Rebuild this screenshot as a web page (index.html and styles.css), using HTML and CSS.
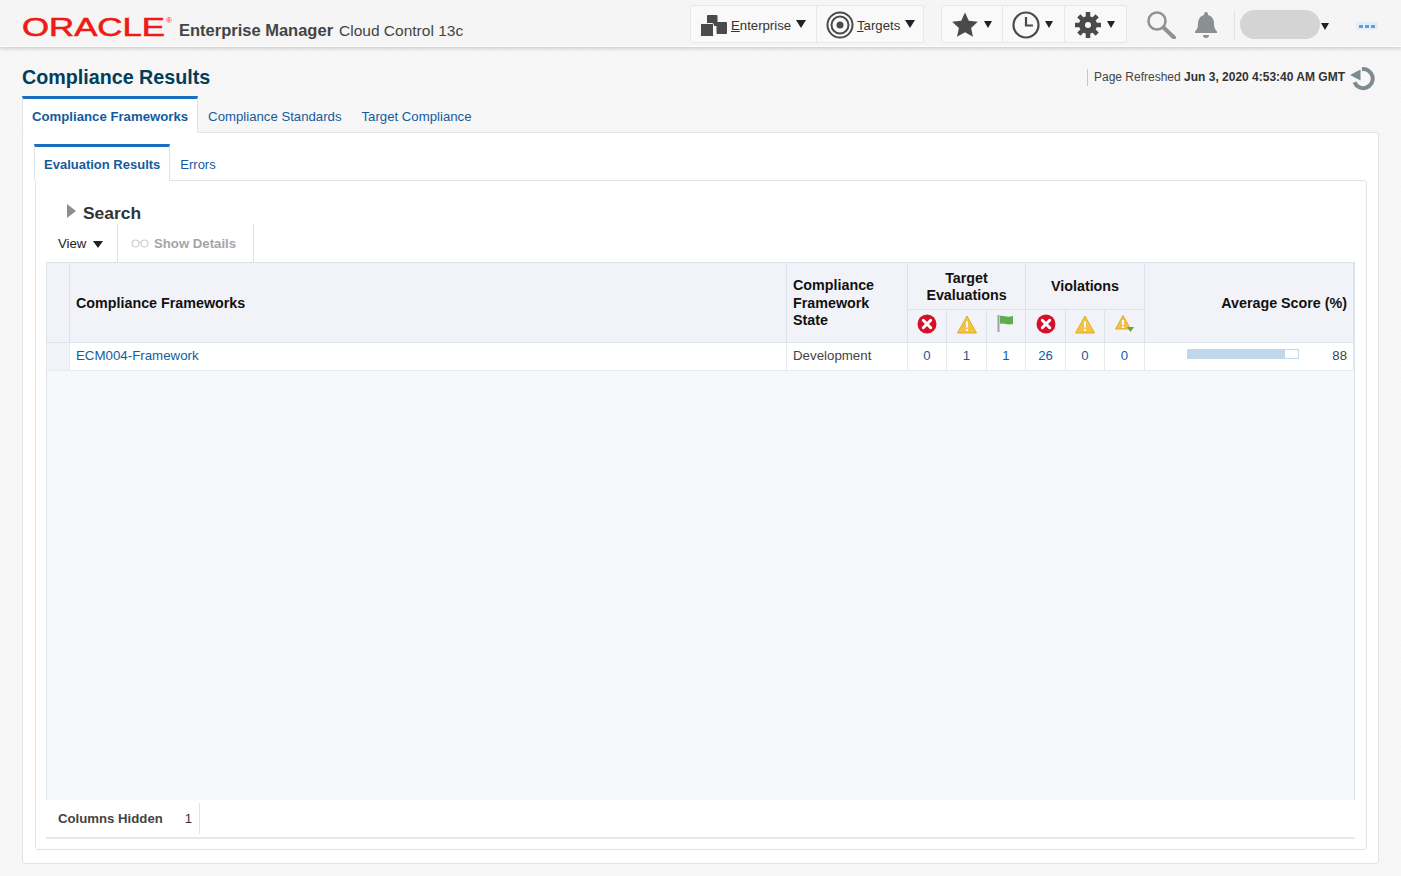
FILE: index.html
```html
<!DOCTYPE html>
<html lang="en">
<head>
<meta charset="utf-8">
<title>Compliance Results</title>
<link rel="stylesheet" href="styles.css">
</head>
<body>
<header class="topbar">
  <div class="brand">
    <svg class="logo" width="152" height="34" viewBox="0 0 152 34"><text class="logo-text" x="0" y="26" textLength="143" lengthAdjust="spacingAndGlyphs">ORACLE</text><text class="logo-reg" x="144" y="13">®</text></svg>
    <span class="brand-em">Enterprise Manager</span>
    <span class="brand-sub">Cloud Control 13c</span>
  </div>
  <nav class="tools">
    <div class="btn-group">
      <button class="tool tool-ent">
        <svg width="28" height="24" viewBox="0 0 28 24"><rect class="ico" x="7" y="2" width="10.500" height="11" rx="1"/><rect class="ico" x="16.500" y="9" width="10.500" height="12" rx="1"/><rect class="ico stroke-bg" x="0.500" y="10.500" width="13" height="13" rx="1"/></svg>
        <span class="tool-label"><u>E</u>nterprise</span><i class="caret caret-lg"></i>
      </button>
      <button class="tool tool-tgt">
        <svg width="28" height="28" viewBox="0 0 28 28"><circle class="line" cx="14" cy="14" r="12.500" stroke-width="2"/><circle class="line" cx="14" cy="14" r="8.500" stroke-width="2"/><circle class="ico" cx="14" cy="14" r="3.500"/></svg>
        <span class="tool-label"><u>T</u>argets</span><i class="caret caret-lg"></i>
      </button>
    </div>
    <div class="btn-group group-two">
      <button class="tool tool-star">
        <svg width="28" height="28" viewBox="0 0 28 28"><path class="ico" d="M14 1.500l3.800 8.300 9 1-6.700 6.100 1.900 8.900-8-4.600-8 4.600 1.900-8.900L1.200 10.800l9-1z"/></svg>
        <i class="caret"></i>
      </button>
      <button class="tool tool-clock">
        <svg width="28" height="28" viewBox="0 0 28 28"><circle class="line" cx="14" cy="14" r="12.500" stroke-width="2.200"/><path class="line" d="M14 6v8.500h7" stroke-width="2.200"/></svg>
        <i class="caret"></i>
      </button>
      <button class="tool tool-gear">
        <svg width="28" height="28" viewBox="0 0 28 28"><circle class="line" cx="14" cy="14" r="6" stroke-width="6"/><path class="line" d="M14 1v6M14 21v6M1 14h6M21 14h6M4.800 4.800l4.200 4.200M19 19l4.200 4.200M4.800 23.200L9 19M19 9l4.200-4.200" stroke-width="4.500"/></svg>
        <i class="caret"></i>
      </button>
    </div>
    <svg class="search-ico" width="30" height="28" viewBox="0 0 30 28"><circle class="line-gray" cx="10" cy="10" r="8.500" stroke-width="2.500"/><path class="line-gray" d="M16.500 16.500l10.500 10" stroke-width="4" stroke-linecap="round"/></svg>
    <svg class="bell-ico" width="24" height="28" viewBox="0 0 24 28"><path class="fill-gray" d="M12 1a2 2 0 0 1 2 2v1c4 1 6 4.500 6 8.500 0 4 1 6 3 8v1.500H1V20.500c2-2 3-4 3-8C4 8.500 6 5 10 4V3a2 2 0 0 1 2-2z"/><path class="fill-gray" d="M9 24h6a3 3 0 0 1-6 0z"/></svg>
    <span class="user-sep"></span>
    <span class="user-pill"></span>
    <i class="caret caret-user"></i>
    <span class="more"><i></i><i></i><i></i></span>
  </nav>
</header>

<main class="page">
  <div class="title-row">
    <h1 class="title">Compliance Results</h1>
    <div class="refresh">
      <span class="refresh-text">Page Refreshed <b>Jun 3, 2020 4:53:40 AM GMT</b></span>
      <svg width="28" height="26" viewBox="0 0 28 26"><path class="refresh-arc" d="M12 4.200a9.500 9.500 0 1 1-7.500 13" stroke-width="4"/><path class="refresh-head" d="M0 10L10.500 4.500v11z"/></svg>
    </div>
  </div>

  <div class="tabs">
    <a class="tab tab-on">Compliance Frameworks</a>
    <a class="tab">Compliance Standards</a>
    <a class="tab">Target Compliance</a>
  </div>

  <section class="outer">
    <div class="tabs sub-tabs">
      <a class="tab tab-on">Evaluation Results</a>
      <a class="tab">Errors</a>
    </div>
    <div class="inner">
      <div class="search-row"><i class="tri"></i><span>Search</span></div>
      <div class="toolbar">
        <button class="view-btn">View<i class="caret caret-view"></i></button>
        <button class="details-btn">
          <svg width="18" height="9" viewBox="0 0 18 9"><circle class="glass" cx="4.500" cy="4.500" r="3.500"/><circle class="glass" cx="13.500" cy="4.500" r="3.500"/><path class="glass" d="M8 3.500h2"/></svg>
          Show Details
        </button>
      </div>

      <div class="grid-wrap">
        <table class="grid">
          <colgroup>
            <col class="c-sel"><col class="c-name"><col class="c-state">
            <col class="c-n1"><col class="c-n2"><col class="c-n1">
            <col class="c-n2"><col class="c-n1"><col class="c-n2">
            <col class="c-score">
          </colgroup>
          <thead>
            <tr class="h1">
              <th rowspan="2"></th>
              <th rowspan="2" class="left">Compliance Frameworks</th>
              <th rowspan="2" class="left">Compliance Framework State</th>
              <th colspan="3">Target<br>Evaluations</th>
              <th colspan="3">Violations</th>
              <th rowspan="2" class="right">Average Score (%)</th>
            </tr>
            <tr class="h2">
              <th><svg width="20" height="20" viewBox="0 0 20 20"><circle class="err" cx="10" cy="10" r="9.500"/><path class="err-x" d="M6.300 6.300l7.400 7.400M13.700 6.300l-7.400 7.400"/></svg></th>
              <th><svg width="20" height="19" viewBox="0 0 20 19"><path class="warn" d="M10 1L19.500 18H.5z"/><path class="warn-m" d="M10 6.500v6M10 14v2"/></svg></th>
              <th><svg class="flag" width="18" height="18" viewBox="0 0 18 18"><path class="flag-pole" d="M1.500 0v17"/><path class="flag-cloth" d="M3 1c4-1 6 2 13 0v8c-6 1.500-9-1.500-13 0z"/></svg></th>
              <th><svg width="20" height="20" viewBox="0 0 20 20"><circle class="err" cx="10" cy="10" r="9.500"/><path class="err-x" d="M6.300 6.300l7.400 7.400M13.700 6.300l-7.400 7.400"/></svg></th>
              <th><svg width="20" height="19" viewBox="0 0 20 19"><path class="warn" d="M10 1L19.500 18H.5z"/><path class="warn-m" d="M10 6.500v6M10 14v2"/></svg></th>
              <th><svg width="20" height="19" viewBox="0 0 20 19"><path class="warn" d="M8 .5L15.500 14H.5z"/><path class="warn-m" d="M8 5v5M8 11v2"/><path class="down" d="M12 12h7l-3.500 5z"/></svg></th>
            </tr>
          </thead>
          <tbody>
            <tr class="row">
              <td></td>
              <td class="left"><a class="lnk">ECM004-Framework</a></td>
              <td class="left">Development</td>
              <td><a class="lnk">0</a></td><td><a class="lnk">1</a></td><td><a class="lnk">1</a></td>
              <td><a class="lnk">26</a></td><td><a class="lnk">0</a></td><td><a class="lnk">0</a></td>
              <td>
                <div class="score">
                  <span class="bar"><span class="bar-fill" style="width:88%"></span></span>
                  <span>88</span>
                </div>
              </td>
            </tr>
          </tbody>
        </table>
      </div>

      <div class="footer">
        <div class="footer-cell"><b>Columns Hidden</b><span>1</span></div>
      </div>
    </div>
  </section>
</main>
</body>
</html>
```

FILE: styles.css
```css
* { box-sizing: border-box; }
html, body { height: 100%; }
body {
  margin: 0;
  overflow: hidden;
  font-family: "Liberation Sans", Arial, sans-serif;
  font-size: 13.200px;
  color: #333;
  background: repeating-linear-gradient(135deg, #f5f5f5 0 1px, #f7f7f7 1px 3px);
}
a { text-decoration: none; }
i { display: block; }

/* top bar */
.topbar {
  height: 47px;
  display: flex;
  justify-content: space-between;
  background: #f5f5f5;
  border-bottom: 1px solid #fff;
  box-shadow: 0 2px 3px rgba(0, 0, 0, .16);
  position: relative;
}
.brand { display: flex; align-items: flex-start; padding: 10px 0 0 22px; }
.logo { display: block; flex: none; margin-right: 5px; }
.logo-text {
  font-family: "Liberation Sans", Arial, sans-serif;
  font-size: 25.500px;
  fill: #f01a14;
  stroke: #f01a14;
  stroke-width: .6px;
}
.logo-reg {
  font-family: "Liberation Sans", Arial, sans-serif;
  font-size: 8px;
  fill: #f01a14;
}
.brand-em { font-size: 16.500px; font-weight: 700; color: #444; margin: 11px 6px 0 0; }
.brand-sub { font-size: 15.500px; color: #444; margin-top: 12px; }

.tools { display: flex; align-items: flex-start; padding: 5px 23px 0 0; }
.btn-group {
  display: flex;
  height: 38px;
  background: #f9f9f9;
  border: 1px solid #e6e8ea;
  border-radius: 2px;
}
.group-two { margin-left: 17px; }
.tool {
  display: flex;
  align-items: center;
  height: 100%;
  padding: 1px 0 0;
  border: 0;
  border-right: 1px solid #e6e8ea;
  background: none;
  font: inherit;
  color: #333;
}
.tool:last-child { border-right: 0; }
.tool-ent { width: 126px; padding-left: 9px; }
.tool-tgt { width: 106px; padding-left: 9px; }
.tool-star { width: 61px; padding-left: 9px; }
.tool-clock { width: 62px; padding-left: 9px; }
.tool-gear { width: 61px; padding-left: 9px; }
.tool svg { display: block; flex: none; }
.tool-label { margin-left: 3px; padding-top: 2px; }
u { text-decoration: underline; }
.caret {
  width: 0; height: 0;
  margin-left: 5px;
  border-style: solid;
  border-width: 7px 4.500px 0;
  border-color: #222 transparent transparent;
}
.caret-lg { border-width: 8px 5px 0; margin-top: -2px; }
.tool-star .caret, .tool-clock .caret, .tool-gear .caret { margin-top: -1px; }
.ico { fill: #4a4a4a; }
.stroke-bg { stroke: #f9f9f9; stroke-width: 1; }
.line { fill: none; stroke: #4a4a4a; }
.line-gray { fill: none; stroke: #8e9295; }
.fill-gray { fill: #8a8f92; }
.search-ico { display: block; margin: 6px 0 0 20px; }
.bell-ico { display: block; margin: 6px 0 0 17px; }
.user-sep { width: 1px; height: 30px; margin: 5px 5px 0 16px; background: #e2e2e2; }
.user-pill { width: 80px; height: 29px; margin-top: 5px; border-radius: 15px; background: #d4d4d4; }
.caret-user { margin: 18px 0 0 1px; }
.more {
  display: flex;
  gap: 2px;
  justify-content: center;
  align-items: center;
  width: 22px;
  height: 8px;
  margin: 17px 0 0 27px;
  background: #e4eef8;
}
.more i { width: 4px; height: 3px; background: #5b9fe0; }

/* page */
.page { padding: 0 22px; }
.title-row {
  height: 49px;
  display: flex;
  justify-content: space-between;
  align-items: center;
  padding-top: 11px;
}
.title { margin: 0; font-size: 19.700px; font-weight: 700; color: #003e5c; }
.refresh { display: flex; align-items: center; padding-right: 1px; margin-top: 1px; }
.refresh-text { padding: 1px 0 1px 6px; border-left: 1px solid #bcc8d6; font-size: 12px; line-height: 15px; color: #444; }
.refresh-text b { color: #333; }
.refresh svg { display: block; margin-left: 5px; }
.refresh-arc { fill: none; stroke: #7d8a90; }
.refresh-head { fill: #7d8a90; }

.tabs { display: flex; height: 36px; }
.tab {
  padding: 0 10px;
  line-height: 41px;
  color: #145c9e;
  font-size: 13.200px;
}
.tab-on {
  position: relative;
  z-index: 1;
  height: 37px;
  padding: 0 9px;
  line-height: 35px;
  font-weight: 700;
  background: #fff;
  border-top: 3px solid #1a6ec0;
  border-left: 1px solid #dfe4ea;
  border-right: 1px solid #dfe4ea;
}
.sub-tabs .tab { font-size: 13px; }

.outer {
  height: 732px;
  padding: 11px 11px 13px 12px;
  background: #fff;
  border: 1px solid #dfe4ea;
  border-radius: 3px;
}
.inner {
  height: 670px;
  padding: 0 11px 0 10px;
  border: 1px solid #dfe4ea;
  border-radius: 3px;
}
.sub-tabs { margin-left: -1px; }
.search-row {
  height: 43px;
  display: flex;
  align-items: flex-end;
  padding-left: 21px;
  font-size: 17.400px;
  font-weight: 700;
  line-height: 22px;
  color: #333;
}
.tri {
  width: 0; height: 0;
  margin: 0 7px 6px 0;
  border-style: solid;
  border-width: 7.500px 0 7.500px 9px;
  border-color: transparent transparent transparent #8a8f94;
}
.toolbar { height: 38px; display: flex; }
.view-btn, .details-btn {
  display: flex;
  align-items: center;
  height: 100%;
  padding: 0;
  border: 0;
  background: none;
  font: inherit;
}
.view-btn { width: 71px; padding-left: 12px; color: #222; }
.caret-view { margin: 2px 0 0 7px; border-width: 7px 5px 0; }
.details-btn {
  width: 137px;
  padding-left: 13px;
  gap: 5px;
  font-weight: 700;
  color: #a5a5a5;
  border-left: 1px solid #dfe4ea;
  border-right: 1px solid #dfe4ea;
}
.glass { fill: none; stroke: #cfcfcf; stroke-width: 1.200; }

.grid-wrap {
  height: 538px;
  background: #f6f8fc;
  border-left: 1px solid #dbe3ec;
  border-right: 1px solid #dbe3ec;
}
.grid {
  width: 1308px;
  table-layout: fixed;
  border-collapse: collapse;
  margin-left: -1px;
}
.c-sel { width: 23px; }
.c-name { width: 717px; }
.c-state { width: 121px; }
.c-n1 { width: 39px; }
.c-n2 { width: 40px; }
.c-score { width: auto; }
.grid th {
  padding: 0;
  background: #f1f3f8;
  border: 1px solid #dbe3ec;
  color: #111;
  font-size: 14.300px;
  font-weight: 700;
  line-height: 17.500px;
  text-align: center;
}
.grid th.left, .grid td.left { text-align: left; padding-left: 6px; }
.grid th.right { text-align: right; padding-right: 6px; }
.h1 { height: 47px; }
.h1 th { padding-top: 2px; }
.h2 { height: 33px; }
.h2 svg { display: block; margin: 0 auto 4px; }
.row { height: 28px; }
.grid td {
  padding: 0 0 2px;
  background: #fff;
  border: 1px solid #e6ebf0;
  text-align: center;
  font-size: 13.200px;
  color: #444;
}
.grid td.left { font-size: 13.300px; }
.grid td:first-child { background: #f1f3f8; }
.lnk { color: #145c9e; }
.score {
  display: flex;
  justify-content: space-between;
  align-items: center;
  padding: 0 6px 0 42px;
}
.bar {
  display: block;
  width: 112px;
  height: 10px;
  margin-top: -3px;
  background: #fff;
  border: 1px solid #c3d8ea;
}
.bar-fill { display: block; height: 100%; background: #c0d6ea; }

.err { fill: #d7102a; }
.err-x { stroke: #fff; stroke-width: 3; fill: none; stroke-linecap: round; }
.warn { fill: #f5c242; stroke: #e5a92a; stroke-width: 1; stroke-linejoin: round; }
.warn-m { stroke: #fff; stroke-width: 2; fill: none; }
.down { fill: #5da84a; }
.flag-pole { stroke: #9aa3a8; stroke-width: 2; fill: none; }
.flag-cloth { fill: #5fae4e; }

.footer {
  height: 39px;
  padding-top: 3px;
  border-bottom: 2px solid #e5e9ee;
}
.footer-cell {
  display: flex;
  justify-content: space-between;
  align-items: center;
  width: 154px;
  height: 31px;
  padding: 0 7px 0 12px;
  border-right: 1px solid #dfe4ea;
  color: #444;
}
.footer-cell span { color: #333; }
```
